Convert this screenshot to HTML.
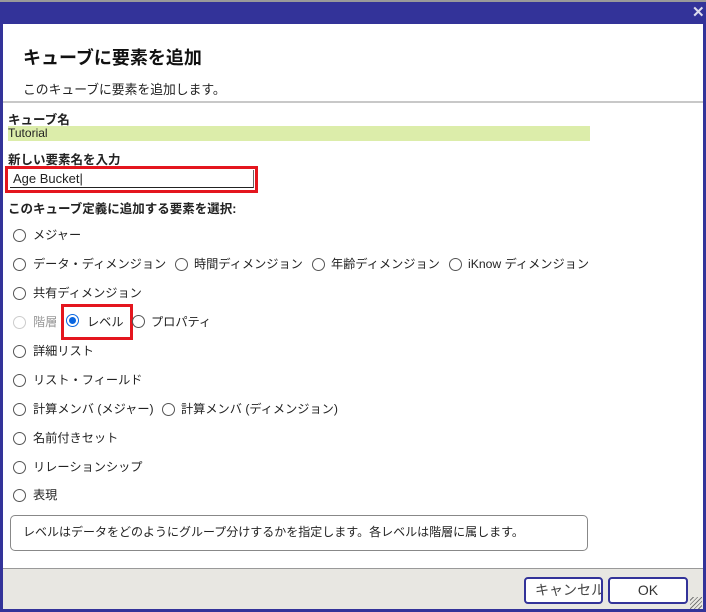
<!DOCTYPE html>
<html><head><meta charset="utf-8"><style>
*{margin:0;padding:0;box-sizing:border-box}
body{width:706px;height:612px;background:#fff;font-family:"Liberation Sans","Noto Sans CJK JP",sans-serif;color:#222;position:relative;overflow:hidden;font-size:13px}
.a{position:absolute;white-space:nowrap}
.r{position:absolute;width:13px;height:13px;border:1px solid #555;border-radius:50%;background:#fff}
.t{position:absolute;font-size:12.2px;white-space:nowrap;line-height:15px}
</style></head><body>
<div class="a" style="left:0;top:0;width:706px;height:612px;border:3px solid #333399;border-top:none"></div>
<div class="a" style="left:0;top:0;width:706px;height:2px;background:#9a9a9a"></div>
<div class="a" style="left:0;top:2px;width:706px;height:22px;background:#333399"></div>
<div class="a" style="left:692px;top:3px;color:#dde;font-weight:bold;font-size:15px">✕</div>
<div class="a" style="left:23px;top:44px;font-size:18px;font-weight:bold;color:#111">キューブに要素を追加</div>
<div class="a" style="left:23px;top:79px;font-size:12.8px">このキューブに要素を追加します。</div>
<div class="a" style="left:3px;top:101px;width:700px;height:2px;background:#c8c8c8"></div>
<div class="a" style="left:8px;top:109px;font-weight:bold;font-size:12.5px">キューブ名</div>
<div class="a" style="left:8px;top:126px;width:582px;height:15px;background:#dcedaa;font-size:12px;line-height:15px">Tutorial</div>
<div class="a" style="left:8px;top:149px;font-weight:bold;font-size:12.5px">新しい要素名を入力</div>
<div class="a" style="left:5px;top:166px;width:253px;height:27px;border:3px solid #e4161e"></div>
<div class="a" style="left:10px;top:170px;width:244px;height:18px;border-bottom:1px solid #222;border-right:1px solid #666;font-size:13px;line-height:17px;padding-left:3px">Age Bucket|</div>
<div class="a" style="left:8px;top:198px;font-weight:bold;font-size:12.5px">このキューブ定義に追加する要素を選択:</div>

<div class="r" style="left:13px;top:229px"></div><div class="t" style="left:33px;top:228px">メジャー</div>
<div class="r" style="left:13px;top:258px"></div><div class="t" style="left:33px;top:257px">データ・ディメンジョン</div>
<div class="r" style="left:175px;top:258px"></div><div class="t" style="left:194px;top:257px">時間ディメンジョン</div>
<div class="r" style="left:312px;top:258px"></div><div class="t" style="left:331px;top:257px">年齢ディメンジョン</div>
<div class="r" style="left:449px;top:258px"></div><div class="t" style="left:468px;top:257px">iKnow ディメンジョン</div>
<div class="r" style="left:13px;top:287px"></div><div class="t" style="left:33px;top:286px">共有ディメンジョン</div>
<div class="r" style="left:13px;top:316px;border-color:#ccc"></div><div class="t" style="left:33px;top:315px;color:#999">階層</div>
<div class="a" style="left:61px;top:304px;width:72px;height:36px;border:3px solid #e4161e"></div>
<div class="r" style="left:66px;top:314px;border:1px solid #0a66e0;"><div style="position:absolute;left:2px;top:2px;width:7px;height:7px;border-radius:50%;background:#0a66e0"></div></div>
<div class="t" style="left:87px;top:315px">レベル</div>
<div class="r" style="left:132px;top:315px"></div><div class="t" style="left:151px;top:315px">プロパティ</div>
<div class="r" style="left:13px;top:345px"></div><div class="t" style="left:33px;top:344px">詳細リスト</div>
<div class="r" style="left:13px;top:374px"></div><div class="t" style="left:33px;top:373px">リスト・フィールド</div>
<div class="r" style="left:13px;top:403px"></div><div class="t" style="left:33px;top:402px">計算メンバ (メジャー)</div>
<div class="r" style="left:162px;top:403px"></div><div class="t" style="left:181px;top:402px">計算メンバ (ディメンジョン)</div>
<div class="r" style="left:13px;top:432px"></div><div class="t" style="left:33px;top:431px">名前付きセット</div>
<div class="r" style="left:13px;top:461px"></div><div class="t" style="left:33px;top:460px">リレーションシップ</div>
<div class="r" style="left:13px;top:489px"></div><div class="t" style="left:33px;top:488px">表現</div>
<div class="a" style="left:10px;top:515px;width:578px;height:36px;border:1px solid #888;border-radius:5px;font-size:12px;padding:7px 0 0 12px">レベルはデータをどのようにグループ分けするかを指定します。各レベルは階層に属します。</div>

<div class="a" style="left:3px;top:568px;width:700px;height:41px;background:#e8e7e2;border-top:1px solid #999"></div>
<div class="a" style="left:524px;top:577px;width:79px;height:27px;border:2px solid #333399;border-radius:4px;background:#fff;font-size:14px;line-height:22px;color:#444;overflow:hidden;padding-left:9px">キャンセル</div>
<div class="a" style="left:608px;top:577px;width:80px;height:27px;border:2px solid #333399;border-radius:4px;background:#fff;font-size:14px;text-align:center;line-height:23px;color:#333">OK</div>
<div class="a" style="left:690px;top:597px;width:12px;height:12px;background:repeating-linear-gradient(135deg,transparent 0 2px,#777 2px 3px)"></div>
</body></html>
